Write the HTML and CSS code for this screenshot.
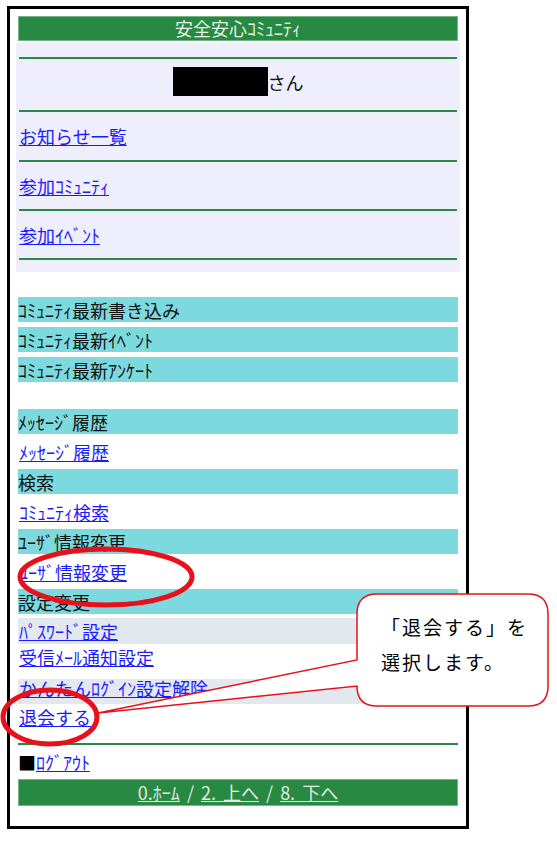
FILE: index.html
```html
<!DOCTYPE html>
<html>
	<head>
		<meta charset="utf-8">
		<title>安全安心ｺﾐｭﾆﾃｨ</title>
		<link rel="stylesheet" href="styles.css">
	</head>
	<body>
		<div class="frame">
			<div class="title">安全安心ｺﾐｭﾆﾃｨ</div>
			<div class="mypage">
				<div class="rule"></div>
				<div class="name"><span class="masked"></span>さん</div>
				<div class="rule"></div>
				<div class="entry tall"><a href="#">お知らせ一覧</a></div>
				<div class="rule"></div>
				<div class="entry"><a href="#">参加ｺﾐｭﾆﾃｨ</a></div>
				<div class="rule"></div>
				<div class="entry"><a href="#">参加ｲﾍﾞﾝﾄ</a></div>
				<div class="rule"></div>
			</div>
			<div class="feeds">
				<div class="head">ｺﾐｭﾆﾃｨ最新書き込み</div>
				<div class="head">ｺﾐｭﾆﾃｨ最新ｲﾍﾞﾝﾄ</div>
				<div class="head">ｺﾐｭﾆﾃｨ最新ｱﾝｹｰﾄ</div>
			</div>
			<div class="menu">
				<div class="head">ﾒｯｾｰｼﾞ履歴</div>
				<div class="link"><a href="#">ﾒｯｾｰｼﾞ履歴</a></div>
				<div class="head">検索</div>
				<div class="link"><a href="#">ｺﾐｭﾆﾃｨ検索</a></div>
				<div class="head">ﾕｰｻﾞ情報変更</div>
				<div class="link"><a href="#">ﾕｰｻﾞ情報変更</a></div>
				<div class="head">設定変更</div>
			</div>
			<div class="settings">
				<div class="shade"><a href="#">ﾊﾟｽﾜｰﾄﾞ設定</a></div>
				<div class="link top"><a href="#">受信ﾒｰﾙ通知設定</a></div>
				<div class="shade raised"><a href="#">かんたんﾛｸﾞｲﾝ設定解除</a></div>
				<div class="link top"><a href="#">退会する</a></div>
			</div>
			<div class="rule wide"></div>
			<div class="logout"><span class="square">■</span><a href="#">ﾛｸﾞｱｳﾄ</a></div>
			<div class="foot">
				<a href="#">0.ﾎｰﾑ</a> / <a href="#">2. 上へ</a> / <a href="#">8. 下へ</a>
			</div>
		</div>

		<svg class="marks" width="557" height="843" viewBox="0 0 557 843">
			<path class="bubble" d="M377 594 H528 Q548 594 548 614 V686 Q548 706 528 706 H377 Q357 706 357 686 L98 713 L357 660 V614 Q357 594 377 594 Z"/>
			<ellipse class="ring" cx="106" cy="577" rx="86" ry="28"/>
			<ellipse class="ring" cx="50" cy="717" rx="47" ry="27"/>
		</svg>
		<div class="note">「退会する」を<br>選択します。</div>
	</body>
</html>
```

FILE: styles.css
```css
body {
	margin: 0;
	font-family: "Noto Sans CJK JP", sans-serif;
	font-size: 18px;
	color: #111;
	background: #fff;
}
a {
	color: #1a1aff;
}

.frame {
	width: 440px;
	margin: 6px 0 0 7px;
	padding: 7px 8px 20px;
	border: 3px solid #000;
}

.title {
	height: 25px;
	box-sizing: border-box;
	border: 1px solid #74b585;
	background: #288a42;
	color: #e9f2ea;
	text-align: center;
	line-height: 23px;
}

.mypage {
	margin: 2px -2px 0;
	padding: 14px 3px 12px;
	background: #eeeefc;
}
.rule {
	height: 2px;
	background: #2a8a44;
}
.rule.wide {
	margin-top: 4px;
}
.name {
	height: 51px;
	box-sizing: border-box;
	padding-bottom: 6px;
	display: flex;
	align-items: center;
	justify-content: center;
}
.masked {
	width: 95px;
	height: 29px;
	background: #000;
}
.entry {
	height: 47px;
	display: flex;
	align-items: center;
}
.entry.tall {
	height: 48px;
}

.feeds {
	margin-top: 25px;
	display: flex;
	flex-direction: column;
	gap: 5px;
}
.menu {
	margin-top: 27px;
}
.settings {
	margin-top: 4px;
}

.head {
	height: 25px;
	display: flex;
	align-items: center;
	background: #7cdadf;
}
.link {
	height: 35px;
	padding-left: 1px;
	display: flex;
	align-items: center;
}
.link.top {
	align-items: flex-start;
	line-height: 26px;
}
.shade {
	height: 26px;
	padding-left: 1px;
	display: flex;
	align-items: center;
	background: #e2e8ee;
}
.shade.raised {
	height: 25px;
	box-sizing: border-box;
	padding-bottom: 8px;
}

.logout {
	height: 34px;
	display: flex;
	align-items: center;
}
.square {
	color: #000;
}

.foot {
	height: 27px;
	box-sizing: border-box;
	border: 1px solid #74b585;
	background: #288a42;
	color: #dfe6e0;
	text-align: center;
	line-height: 25px;
	word-spacing: 3px;
}
.foot a {
	color: #e4e8e4;
}

.marks {
	position: absolute;
	top: 0;
	left: 0;
	pointer-events: none;
}
.bubble {
	fill: #fff;
	stroke: #e8101a;
	stroke-width: 1.5;
}
.ring {
	fill: none;
	stroke: #e8101a;
	stroke-width: 5;
}
.note {
	position: absolute;
	left: 381px;
	top: 609px;
	font-size: 19px;
	line-height: 35px;
	letter-spacing: 2px;
	color: #000;
}
```
